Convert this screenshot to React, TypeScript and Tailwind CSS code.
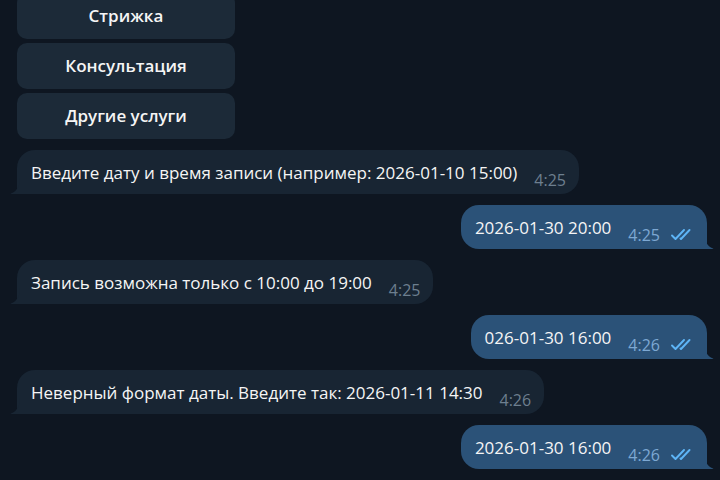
import React from 'react'

const FONT = { fontFamily: '"Open Sans", "Noto Sans", sans-serif' }

const buttons = ['Стрижка', 'Консультация', 'Другие услуги']

type Msg = { out: boolean; text: string; time: string }

const messages: Msg[] = [
  { out: false, text: 'Введите дату и время записи (например: 2026-01-10 15:00)', time: '4:25' },
  { out: true, text: '2026-01-30 20:00', time: '4:25' },
  { out: false, text: 'Запись возможна только с 10:00 до 19:00', time: '4:25' },
  { out: true, text: '026-01-30 16:00', time: '4:26' },
  { out: false, text: 'Неверный формат даты. Введите так: 2026-01-11 14:30', time: '4:26' },
  { out: true, text: '2026-01-30 16:00', time: '4:26' },
]

function DoubleCheck() {
  return (
    <svg width="24" height="12" viewBox="0 0 24 12" fill="none" className="ml-[11px] translate-y-[1px]">
      <path d="M1 7.5 L4.5 11 L13 2" stroke="#5eb5f7" strokeWidth="1.9" strokeLinecap="round" strokeLinejoin="round" />
      <path d="M9.5 10.5 L10 11 L18.5 2" stroke="#5eb5f7" strokeWidth="1.9" strokeLinecap="round" strokeLinejoin="round" />
    </svg>
  )
}

function Tail({ out }: { out: boolean }) {
  if (out) {
    return (
      <svg width="10" height="16" viewBox="0 0 10 16" className="absolute bottom-0 right-[-7px]">
        <path d="M0 0 C0 8 3 13 9 15.5 C9.5 15.7 9.4 16 9 16 L0 16 Z" fill="#2b5278" />
      </svg>
    )
  }
  return (
    <svg width="10" height="16" viewBox="0 0 10 16" className="absolute bottom-0 left-[-7px]">
      <path d="M10 0 C10 8 7 13 1 15.5 C0.5 15.7 0.6 16 1 16 L10 16 Z" fill="#182533" />
    </svg>
  )
}

function Bubble({ msg }: { msg: Msg }) {
  return (
    <div className={msg.out ? 'flex justify-end pr-[13px]' : 'flex justify-start pl-[17px]'}>
      <div
        className={
          msg.out
            ? 'relative flex h-[44px] items-end rounded-[18px] rounded-br-none bg-[#2b5278] pl-[14px] pr-[12px] pb-[10px]'
            : 'relative flex h-[44px] items-end rounded-[18px] rounded-bl-none bg-[#182533] pl-[14px] pr-[13px] pb-[10px]'
        }
      >
        <span className="text-[17px] leading-[22px] text-[#f5f5f5]">{msg.text}</span>
        <span
          className={
            msg.out
              ? 'ml-[17px] translate-y-[5px] text-[16px] leading-[18px] text-[#7da8d3]'
              : 'ml-[17px] translate-y-[5px] text-[16px] leading-[18px] text-[#6d7f8f]'
          }
        >
          {msg.time}
        </span>
        {msg.out && <DoubleCheck />}
        <Tail out={msg.out} />
      </div>
    </div>
  )
}

export default function App() {
  return (
    <div className="h-[480px] w-[720px] overflow-hidden bg-[#0e1621]" style={FONT}>
      <div className="-mt-[7px] flex flex-col">
        <div className="ml-[17px] flex w-[218px] flex-col gap-[4px]">
          {buttons.map((b) => (
            <div
              key={b}
              className="flex h-[46px] items-center justify-center rounded-[10px] bg-[#1c2a38] text-[17px] font-semibold text-[#f5f5f5]"
            >
              {b}
            </div>
          ))}
        </div>
        <div className="mt-[11px] flex flex-col gap-[11px]">
          {messages.map((m, i) => (
            <Bubble key={i} msg={m} />
          ))}
        </div>
      </div>
    </div>
  )
}
